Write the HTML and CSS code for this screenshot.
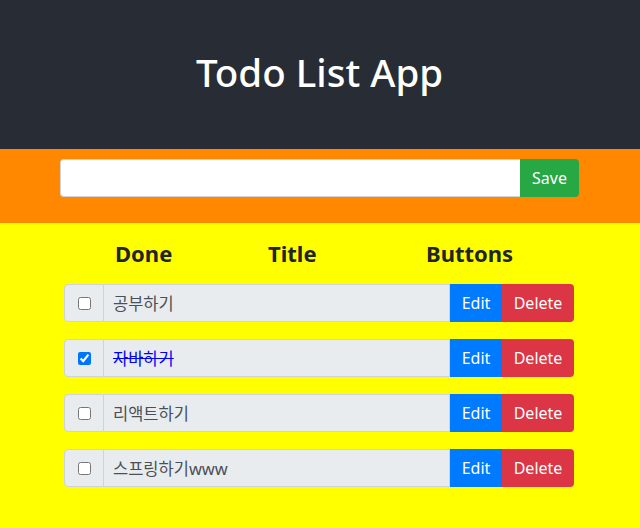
FILE: index.html
```html
<!DOCTYPE html>
<html lang="ko">
<head>
<meta charset="utf-8">
<title>Todo List App</title>
<link rel="stylesheet" href="styles.css">
</head>
<body>
  <header class="app-header">
    <h1 class="app-title">Todo List App</h1>
  </header>
  <section class="entry">
    <div class="entry-group">
      <input class="entry-input" type="text">
      <button class="btn btn-save">Save</button>
    </div>
  </section>
  <main class="board">
    <div class="col-heads">
      <h4 class="col-head">Done</h4>
      <h4 class="col-head">Title</h4>
      <h4 class="col-head">Buttons</h4>
    </div>
    <ul class="todo-list">
      <li class="todo">
        <span class="todo-check"><input type="checkbox"></span>
        <span class="todo-title">공부하기</span>
        <button class="btn btn-edit">Edit</button>
        <button class="btn btn-delete">Delete</button>
      </li>
      <li class="todo">
        <span class="todo-check"><input type="checkbox" checked></span>
        <span class="todo-title done">자바하기</span>
        <button class="btn btn-edit">Edit</button>
        <button class="btn btn-delete">Delete</button>
      </li>
      <li class="todo">
        <span class="todo-check"><input type="checkbox"></span>
        <span class="todo-title">리액트하기</span>
        <button class="btn btn-edit">Edit</button>
        <button class="btn btn-delete">Delete</button>
      </li>
      <li class="todo">
        <span class="todo-check"><input type="checkbox"></span>
        <span class="todo-title">스프링하기www</span>
        <button class="btn btn-edit">Edit</button>
        <button class="btn btn-delete">Delete</button>
      </li>
    </ul>
  </main>
</body>
</html>
```
FILE: styles.css
```css
* { box-sizing: border-box; }
html, body { margin: 0; padding: 0; }
body {
  background: #ffff00;
  font-family: "Noto Sans", "Noto Sans CJK KR", sans-serif;
  color: #212529;
  min-height: 528px;
}
.app-header {
  background: #282c34;
  height: 149px;
  display: flex;
  align-items: center;
  justify-content: center;
  padding-right: 1px;
}
.app-title {
  margin: 0 0 4px;
  color: #ffffff;
  font-size: 38.5px;
  font-weight: 500;
  line-height: 1.2;
}
.entry {
  background: #ff8800;
  padding: 10px 1px 26px 0;
}
.entry-group {
  width: 519px;
  height: 38px;
  margin: 0 auto;
  display: flex;
}
.entry-input {
  flex: 1;
  min-width: 0;
  height: 38px;
  border: 1px solid #ced4da;
  border-right: none;
  border-radius: 4px 0 0 4px;
  background: #ffffff;
  font: inherit;
  font-size: 16px;
  padding: 6px 12px;
}
.btn {
  border: none;
  margin: 0;
  font-family: "Noto Sans", sans-serif;
  font-size: 16px;
  color: #ffffff;
  padding: 0;
  height: 38px;
  cursor: pointer;
}
.btn-save {
  width: 59px;
  background: #28a745;
  border-radius: 0 4px 4px 0;
}
.board {
  padding: 15px 2px 0 0;
}
.col-heads {
  display: grid;
  grid-template-columns: 153px 158px auto;
  padding-left: 115px;
  margin-bottom: 16px;
}
.col-head {
  margin: 0;
  font-size: 22px;
  font-weight: 700;
  line-height: 30px;
}
.todo-list {
  list-style: none;
  margin: 0 auto;
  padding: 0;
  width: 510px;
}
.todo {
  display: flex;
  height: 38px;
  margin-bottom: 17px;
}
.todo-check {
  width: 40px;
  display: flex;
  align-items: center;
  justify-content: center;
  background: #e9ecef;
  border: 1px solid #ced4da;
  border-radius: 4px 0 0 4px;
}
.todo-check input {
  margin: 0;
  width: 13px;
  height: 13px;
}
.todo-title {
  flex: 1;
  display: flex;
  align-items: center;
  background: #e9ecef;
  border: 1px solid #ced4da;
  border-left: none;
  padding: 0 9px;
  font-size: 16.5px;
  color: #495057;
}
.todo-title.done {
  color: #0000ff;
  text-decoration: line-through;
}
.btn-edit {
  width: 52px;
  background: #007bff;
}
.btn-delete {
  width: 72px;
  background: #dc3545;
  border-radius: 0 4px 4px 0;
}
```
